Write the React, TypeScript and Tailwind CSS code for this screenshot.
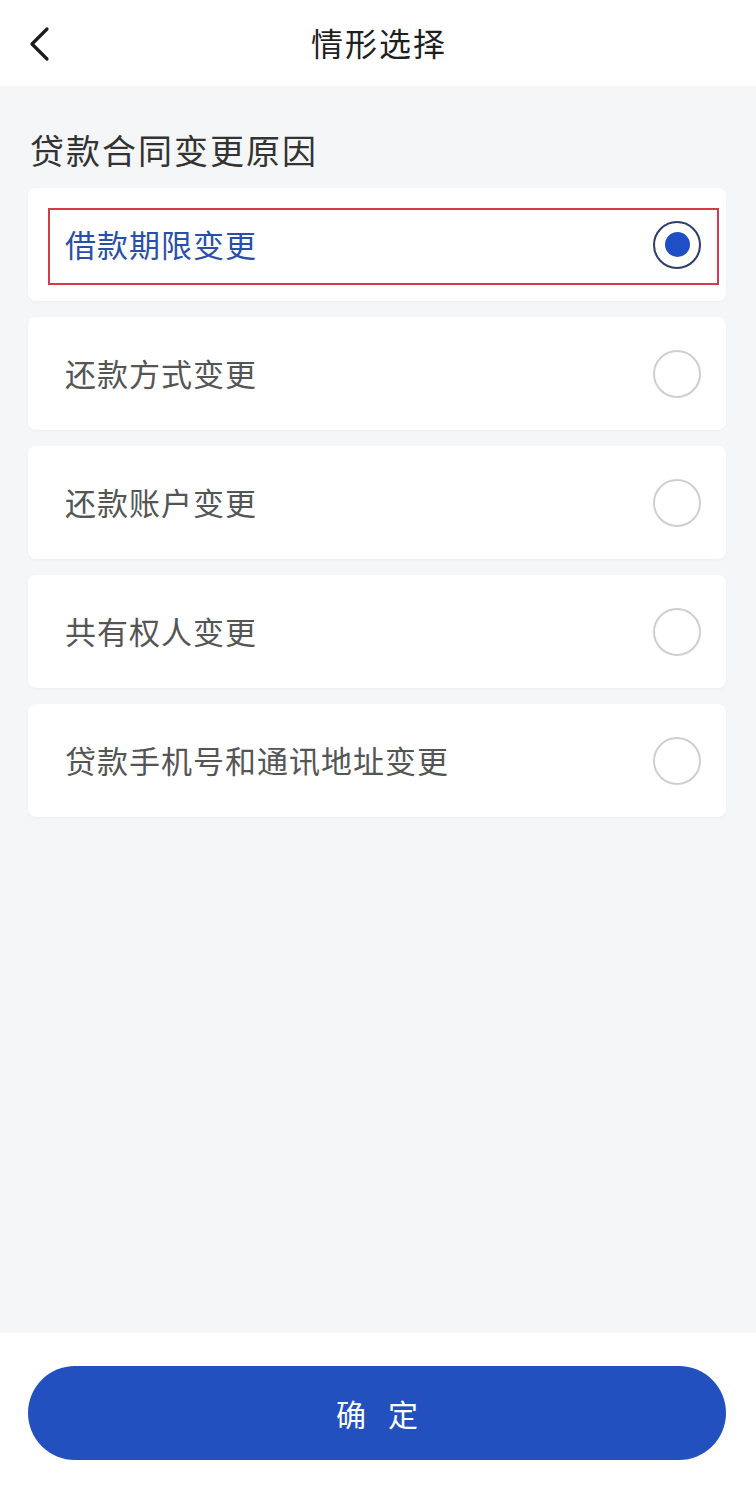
import React from "react";

const items = [
  "借款期限变更",
  "还款方式变更",
  "还款账户变更",
  "共有权人变更",
  "贷款手机号和通讯地址变更",
];

function Radio({ checked }: { checked: boolean }) {
  if (checked) {
    return (
      <div className="w-[48px] h-[48px] rounded-full border-[2px] border-[#2b3d6b] flex items-center justify-center shrink-0">
        <div className="w-[25px] h-[25px] rounded-full bg-[#1f4fc4]" />
      </div>
    );
  }
  return <div className="w-[48px] h-[48px] rounded-full border-[2px] border-[#cfcfcf] shrink-0" />;
}

export default function App() {
  return (
    <div
      className="w-[756px] h-[1490px] flex flex-col bg-[#f5f6f7]"
      style={{ fontFamily: '"Noto Sans CJK SC", "Noto Sans", sans-serif' }}
    >
      <header className="h-[86px] bg-white relative flex items-center justify-center shrink-0">
        <svg
          className="absolute left-[26px] top-[25px]"
          width="26"
          height="38"
          viewBox="0 0 26 38"
          fill="none"
        >
          <path d="M21 4 L6 19 L21 34" stroke="#1c1c1c" strokeWidth="3.2" strokeLinecap="round" strokeLinejoin="round" />
        </svg>
        <div className="text-[32px] leading-none text-[#1f1f1f] tracking-[2px] pl-[2px] mt-[-2px]">情形选择</div>
      </header>

      <main className="flex-1 flex flex-col">
        <div className="px-[30px] pt-[42px] h-[102px] text-[34px] leading-[44px] text-[#333333] tracking-[2px]">
          贷款合同变更原因
        </div>
        <div className="pl-[28px] pr-[30px] flex flex-col gap-[16px]">
          {items.map((t, i) => (
            <div
              key={t}
              className="relative h-[113px] bg-white rounded-[8px] shadow-[0_1px_3px_rgba(0,0,0,0.04)] flex items-center justify-between pl-[37px] pr-[25px]"
            >
              {i === 0 && (
                <div className="absolute left-[20px] right-[7px] top-[20px] bottom-[16px] border-[2px] border-[#d43a4a] pointer-events-none" />
              )}
              <span
                className={
                  "text-[31px] leading-none tracking-[1px] mt-[-2px] " +
                  (i === 0 ? "text-[#2a4fa8]" : "text-[#555555]")
                }
              >
                {t}
              </span>
              <Radio checked={i === 0} />
            </div>
          ))}
        </div>
      </main>

      <footer className="h-[157px] bg-white shrink-0 pl-[28px] pr-[30px] pt-[33px]">
        <button className="w-full h-[94px] rounded-full bg-[#2350bf] text-white text-[30px] leading-none flex items-center justify-center">
          <span className="tracking-[22px] pl-[22px]">确定</span>
        </button>
      </footer>
    </div>
  );
}
